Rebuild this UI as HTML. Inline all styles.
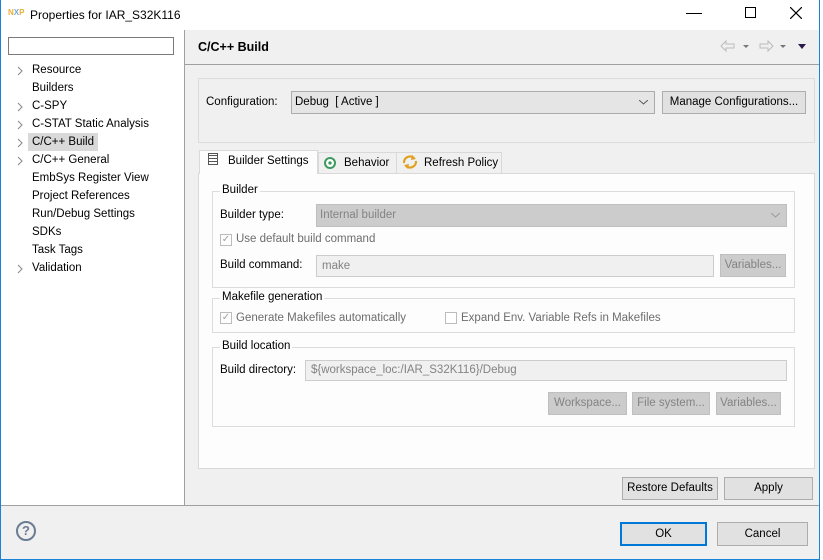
<!DOCTYPE html>
<html><head><style>
*{box-sizing:border-box;margin:0;padding:0}
body{width:823px;height:560px;position:relative;overflow:hidden;background:#f0f0f0;font-family:"Liberation Sans",sans-serif;font-size:11.5px;color:#000}
.a{position:absolute}
.btn{position:absolute;background:#e1e1e1;border:1px solid #adadad;text-align:center;line-height:21px;font-size:11.5px}
.dis{color:#838383;background:#cccccc;border-color:#bfbfbf}
.grp{position:absolute;border:1px solid #dcdcdc}
.gl{position:absolute;top:-8px;left:7px;background:#fdfdfd;padding:0 2px}
.tree div{position:absolute;left:32px;height:18px;line-height:18px}
.chev{position:absolute;left:17px;width:7px;height:10px}
</style></head><body>
<div class="a" style="left:0;top:0;width:823px;height:30px;background:#fff"></div>
<div class="a" style="left:8px;top:8px;font-size:8px;font-weight:bold;color:#e8b030">N<span style="color:#7aa8d8">X</span>P</div>
<div class="a" style="left:30px;top:8px;font-size:12px">Properties for IAR_S32K116</div>
<div class="a" style="left:686px;top:13px;width:16px;height:1px;background:#000"></div>
<div class="a" style="left:745px;top:7px;width:11px;height:11px;border:1px solid #000"></div>
<svg class="a" style="left:790px;top:7px" width="12" height="12"><path d="M0 0L12 12M12 0L0 12" stroke="#000" stroke-width="1.2"/></svg>
<div class="a" style="left:0;top:30px;width:185px;height:476px;background:#fff;border-right:1px solid #a0a0a0"></div>
<div class="a" style="left:8px;top:37px;width:166px;height:18px;border:1px solid #7a7a7a;background:#fff"></div>
<div class="tree">
<svg class="chev" style="top:66px"><path d="M1 1L5 5L1 9" stroke="#888" fill="none"/></svg><div style="top:61px">Resource</div>
<div style="top:79px">Builders</div>
<svg class="chev" style="top:102px"><path d="M1 1L5 5L1 9" stroke="#888" fill="none"/></svg><div style="top:97px">C-SPY</div>
<svg class="chev" style="top:120px"><path d="M1 1L5 5L1 9" stroke="#888" fill="none"/></svg><div style="top:115px">C-STAT Static Analysis</div>
<svg class="chev" style="top:138px"><path d="M1 1L5 5L1 9" stroke="#888" fill="none"/></svg><div style="top:133px;left:28px;padding:0 4px;background:#d9d9d9">C/C++ Build</div>
<svg class="chev" style="top:156px"><path d="M1 1L5 5L1 9" stroke="#888" fill="none"/></svg><div style="top:151px">C/C++ General</div>
<div style="top:169px">EmbSys Register View</div>
<div style="top:187px">Project References</div>
<div style="top:205px">Run/Debug Settings</div>
<div style="top:223px">SDKs</div>
<div style="top:241px">Task Tags</div>
<svg class="chev" style="top:264px"><path d="M1 1L5 5L1 9" stroke="#888" fill="none"/></svg><div style="top:259px">Validation</div>
</div>
<div class="a" style="left:198px;top:40px;font-weight:bold;font-size:12.5px">C/C++ Build</div>
<svg class="a" style="left:718px;top:38px" width="95" height="18">
<path d="M3 8L8 3V6H16V10H8V13Z" fill="none" stroke="#bbb"/>
<path d="M25 7H31L28 10Z" fill="#777"/>
<path d="M55 8L50 3V6H42V10H50V13Z" fill="none" stroke="#bbb"/>
<path d="M62 7H68L65 10Z" fill="#777"/>
<path d="M80 6H88L84 11Z" fill="#2a1a4a"/>
</svg>
<div class="a" style="left:185px;top:64px;width:634px;height:1px;background:#a0a0a0"></div>
<div class="grp" style="left:198px;top:78px;width:617px;height:65px"></div>
<div class="a" style="left:206px;top:96px">Configuration:</div>
<div class="a" style="left:291px;top:91px;width:364px;height:23px;background:#e5e5e5;border:1px solid #acacac;padding:4px 3px;">Debug&nbsp; [ Active ]<svg style="position:absolute;right:6px;top:8px" width="9" height="5"><path d="M0 0L4.5 4L9 0" stroke="#555" fill="none"/></svg></div>
<div class="btn" style="left:662px;top:91px;width:144px;height:23px">Manage Configurations...</div>
<div class="a" style="left:198px;top:173px;width:617px;height:296px;background:#fdfdfd;border:1px solid #d9d9d9"></div>
<div class="a" style="left:199px;top:150px;width:119px;height:24px;background:#fdfdfd;border:1px solid #d9d9d9;border-bottom:none"></div>
<div class="a" style="left:318px;top:152px;width:79px;height:21px;border:1px solid #d9d9d9;border-bottom:none"></div>
<div class="a" style="left:396px;top:152px;width:106px;height:21px;border:1px solid #d9d9d9;border-bottom:none"></div>
<div class="a" style="left:208px;top:153px;width:10px;height:12px;border:1px solid #555;background:repeating-linear-gradient(#fff 0 1px,#555 1px 2px,#fff 2px 3px)"></div>
<div class="a" style="left:228px;top:155px">Builder Settings</div>
<div class="a" style="left:324px;top:157px;width:12px;height:12px;border-radius:50%;border:2px solid #3c9a5c;background:radial-gradient(#3c9a5c 30%,#fff 32%)"></div>
<div class="a" style="left:344px;top:157px">Behavior</div>
<svg class="a" style="left:402px;top:154px" width="16" height="16"><path d="M2 9A6 6 0 0 1 12 4M14 7A6 6 0 0 1 4 12" stroke="#e0a020" stroke-width="2.2" fill="none"/><path d="M10 1L14 5L9 6Z M6 15L2 11L7 10Z" fill="#e0a020"/></svg>
<div class="a" style="left:424px;top:157px">Refresh Policy</div>
<div class="grp" style="left:212px;top:191px;width:583px;height:97px"><span class="gl">Builder</span></div>
<div class="a" style="left:220px;top:209px">Builder type:</div>
<div class="a" style="left:316px;top:204px;width:471px;height:23px;background:#ccc;border:1px solid #bfbfbf;color:#838383;padding:4px 3px">Internal builder<svg style="position:absolute;right:6px;top:8px" width="9" height="5"><path d="M0 0L4.5 4L9 0" stroke="#999" fill="none"/></svg></div>
<div class="a" style="left:220px;top:234px;width:12px;height:12px;border:1px solid #bcbcbc;color:#a0a0a0;font-size:10px;line-height:10px;text-align:center">&#10003;</div>
<div class="a" style="left:236px;top:233px;color:#6d6d6d">Use default build command</div>
<div class="a" style="left:220px;top:259px">Build command:</div>
<div class="a" style="left:316px;top:255px;width:398px;height:22px;background:#f0f0f0;border:1px solid #ccc;color:#838383;padding:4px 5px">make</div>
<div class="btn dis" style="left:720px;top:254px;width:66px;height:23px">Variables...</div>
<div class="grp" style="left:212px;top:298px;width:583px;height:35px"><span class="gl">Makefile generation</span></div>
<div class="a" style="left:220px;top:312px;width:12px;height:12px;border:1px solid #bcbcbc;color:#a0a0a0;font-size:10px;line-height:10px;text-align:center">&#10003;</div>
<div class="a" style="left:236px;top:312px;color:#6d6d6d">Generate Makefiles automatically</div>
<div class="a" style="left:445px;top:312px;width:12px;height:12px;border:1px solid #bcbcbc;background:#fff"></div>
<div class="a" style="left:461px;top:312px;color:#6d6d6d">Expand Env. Variable Refs in Makefiles</div>
<div class="grp" style="left:212px;top:347px;width:583px;height:80px"><span class="gl">Build location</span></div>
<div class="a" style="left:220px;top:364px">Build directory:</div>
<div class="a" style="left:305px;top:360px;width:482px;height:21px;background:#f0f0f0;border:1px solid #ccc;color:#838383;padding:3px 5px">${workspace_loc:/IAR_S32K116}/Debug</div>
<div class="btn dis" style="left:548px;top:392px;width:79px;height:23px">Workspace...</div>
<div class="btn dis" style="left:632px;top:392px;width:78px;height:23px">File system...</div>
<div class="btn dis" style="left:716px;top:392px;width:65px;height:23px">Variables...</div>
<div class="btn" style="left:622px;top:477px;width:96px;height:23px">Restore Defaults</div>
<div class="btn" style="left:724px;top:477px;width:89px;height:23px">Apply</div>
<div class="a" style="left:0;top:505px;width:823px;height:1px;background:#a0a0a0"></div>
<div class="a" style="left:16px;top:521px;width:20px;height:20px;border:2px solid #6b7b92;border-radius:50%;text-align:center;line-height:16px;font-weight:bold;color:#6b7b92;font-size:13px">?</div>
<div class="btn" style="left:620px;top:522px;width:87px;height:24px;border:2px solid #0078d7;line-height:20px">OK</div>
<div class="btn" style="left:717px;top:522px;width:91px;height:24px;line-height:22px">Cancel</div>
<div class="a" style="left:0;top:0;width:1px;height:560px;background:#1883d7"></div>
<div class="a" style="left:819px;top:0;width:1px;height:560px;background:#1883d7"></div>
<div class="a" style="left:0;top:559px;width:823px;height:1px;background:#1883d7"></div>
<div class="a" style="left:820px;top:0;width:3px;height:560px;background:#fff"></div>
</body></html>
